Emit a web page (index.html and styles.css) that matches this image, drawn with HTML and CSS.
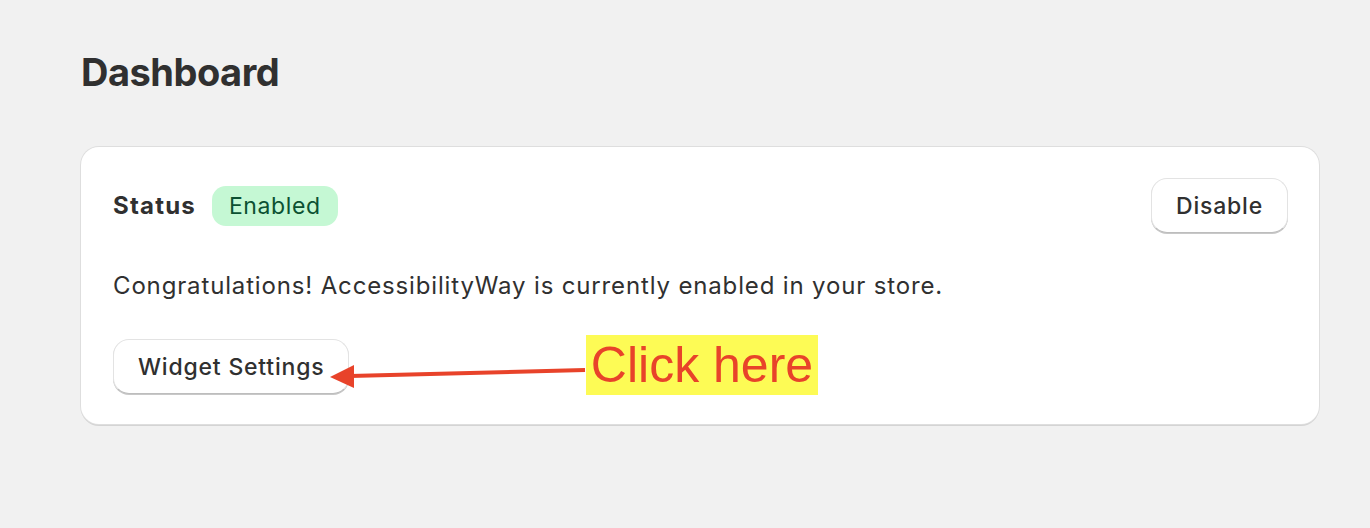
FILE: index.html
```html
<!DOCTYPE html>
<html lang="en">
<head>
    <meta charset="UTF-8">
    <meta name="viewport" content="width=device-width, initial-scale=1.0">
    <title>Dashboard</title>
    <link rel="stylesheet" href="styles.css">
</head>
<body>
    <main class="page">
        <h1 class="page-title">Dashboard</h1>

        <section class="card">
            <div class="card-header">
                <div class="status">
                    <span class="status-label">Status</span>
                    <span class="badge">Enabled</span>
                </div>
                <button class="btn">Disable</button>
            </div>

            <p class="message">Congratulations! AccessibilityWay is currently enabled in your store.</p>

            <div class="actions">
                <button class="btn">Widget Settings</button>
            </div>

            <!-- Annotation drawn over the card -->
            <svg class="arrow" width="270" height="30" viewBox="0 0 270 30">
                <line x1="22" y1="16" x2="257" y2="10" stroke="#e8432a" stroke-width="4"/>
                <polygon points="2,17 26,5 26,28" fill="#e8432a"/>
            </svg>
            <div class="callout">Click here</div>
        </section>
    </main>
</body>
</html>
```

FILE: styles.css
```css
body {
    margin: 0;
    background-color: #f1f1f1;
    font-family: 'Inter', 'Noto Sans', sans-serif;
    color: #303030;
}

.page {
    padding: 48px 51px 100px 81px;
}

.page-title {
    margin: 0 0 51px;
    font-size: 38px;
    line-height: 48px;
    font-weight: 700;
    letter-spacing: -0.5px;
}

.card {
    position: relative;
    background-color: #fff;
    border-radius: 18px;
    padding: 31px 31px 30px 32px;
    box-shadow: 0 0 0 1px #dedede, 0 2px 0 0 #d4d4d4;
    display: flex;
    flex-direction: column;
    gap: 37px;
}

.card-header {
    display: flex;
    justify-content: space-between;
    align-items: center;
}

.status {
    display: flex;
    align-items: center;
    gap: 16px;
}

.status-label {
    font-size: 24px;
    font-weight: 700;
    letter-spacing: 1.2px;
}

.badge {
    background-color: #c5f8d4;
    color: #0c5132;
    font-size: 23px;
    letter-spacing: 0.6px;
    padding: 4px 17px;
    line-height: 32px;
    border-radius: 14px;
}

.btn {
    font-family: inherit;
    font-size: 23px;
    font-weight: 500;
    letter-spacing: 0.8px;
    color: #303030;
    background-color: #fff;
    border: 1px solid #e3e3e3;
    border-bottom-color: #bdbdbd;
    border-radius: 16px;
    height: 55px;
    padding: 0 24px;
    box-shadow: 0 1px 0 #c8c8c8;
}

.message {
    margin: 0;
    font-size: 24px;
    line-height: 32px;
    letter-spacing: 0.85px;
}

.actions {
    display: flex;
}

.arrow {
    position: absolute;
    left: 247px;
    top: 213px;
}

.callout {
    position: absolute;
    left: 505px;
    top: 188px;
    width: 232px;
    height: 60px;
    background-color: #fdfb55;
    color: #e8432a;
    font-family: 'Liberation Sans', Arial, sans-serif;
    font-size: 50px;
    line-height: 60px;
    text-align: center;
}
```
